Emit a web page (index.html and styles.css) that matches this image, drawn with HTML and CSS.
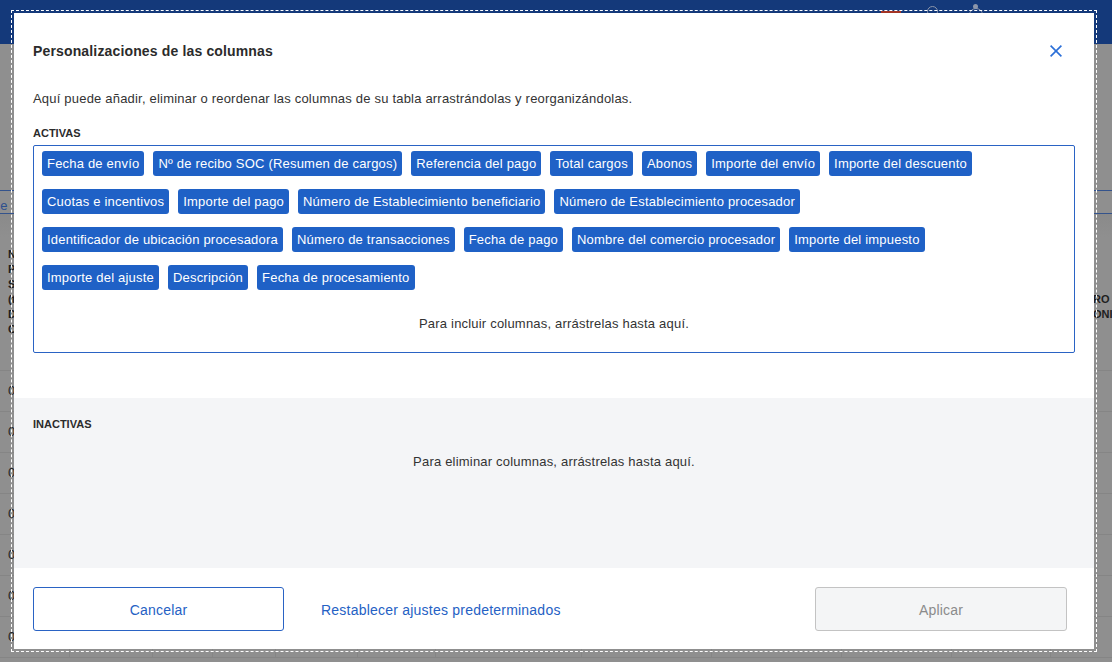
FILE: index.html
```html
<!DOCTYPE html>
<html lang="es">
<head>
<meta charset="utf-8">
<title>Personalizaciones de las columnas</title>
<link rel="stylesheet" href="styles.css">
</head>
<body>
<div class="page">
  <div class="topbar">
    <span class="tb-red"></span>
    <span class="tb-circle"></span>
    <span class="tb-user"></span>
  </div>
  <div class="sub"></div>
  <div class="tabs"><span class="tab-text">de</span></div>
  <div class="band"></div>
  <div class="thead">
    <div class="th-left">Nº<br>Pa<br>SO<br>(tr<br>De<br>Co</div>
    <div class="th-right"><span>RO DE</span><span>ONIO</span></div>
  </div>
  <div class="rows">
    <div class="row"><span class="cell c1">0</span><span class="cell c2"></span><span class="cell c3"></span><span class="cell c4"></span><span class="cell c5"></span><span class="cell c6"></span><span class="cell c7"></span><span class="cell c8"></span><span class="cell c9"></span><span class="cell c10"></span><span class="cell c11"></span></div>
    <div class="row"><span class="cell c1">0</span><span class="cell c2"></span><span class="cell c3"></span><span class="cell c4"></span><span class="cell c5"></span><span class="cell c6"></span><span class="cell c7"></span><span class="cell c8"></span><span class="cell c9"></span><span class="cell c10"></span><span class="cell c11"></span></div>
    <div class="row"><span class="cell c1">0</span><span class="cell c2"></span><span class="cell c3"></span><span class="cell c4"></span><span class="cell c5"></span><span class="cell c6"></span><span class="cell c7"></span><span class="cell c8"></span><span class="cell c9"></span><span class="cell c10"></span><span class="cell c11"></span></div>
    <div class="row"><span class="cell c1">0</span><span class="cell c2"></span><span class="cell c3"></span><span class="cell c4"></span><span class="cell c5"></span><span class="cell c6"></span><span class="cell c7"></span><span class="cell c8"></span><span class="cell c9"></span><span class="cell c10"></span><span class="cell c11"></span></div>
    <div class="row"><span class="cell c1">0</span><span class="cell c2"></span><span class="cell c3"></span><span class="cell c4"></span><span class="cell c5"></span><span class="cell c6"></span><span class="cell c7"></span><span class="cell c8"></span><span class="cell c9"></span><span class="cell c10"></span><span class="cell c11"></span></div>
    <div class="row"><span class="cell c1">0</span><span class="cell c2"></span><span class="cell c3"></span><span class="cell c4"></span><span class="cell c5"></span><span class="cell c6"></span><span class="cell c7"></span><span class="cell c8"></span><span class="cell c9"></span><span class="cell c10"></span><span class="cell c11"></span></div>
    <div class="row"><span class="cell c1">0</span><span class="cell c2"></span><span class="cell c3"></span><span class="cell c4"></span><span class="cell c5"></span><span class="cell c6"></span><span class="cell c7"></span><span class="cell c8"></span><span class="cell c9"></span><span class="cell c10"></span><span class="cell c11"></span></div>
  </div>

  <div class="modal" role="dialog" aria-labelledby="mtitle">
    <div class="modal-head">
      <h2 id="mtitle" class="modal-title">Personalizaciones de las columnas</h2>
      <button class="close-btn" aria-label="Cerrar">
        <svg width="12" height="12" viewBox="0 0 12 12"><path d="M0.6 0.6 L11.4 11.4 M11.4 0.6 L0.6 11.4" stroke="#2b6fd8" stroke-width="1.6" fill="none"/></svg>
      </button>
    </div>
    <p class="modal-desc">Aquí puede añadir, eliminar o reordenar las columnas de su tabla arrastrándolas y reorganizándolas.</p>
    <div class="section-label">ACTIVAS</div>
    <div class="active-box">
      <div class="chip-row">
        <span class="chip">Fecha de envío</span>
        <span class="chip">Nº de recibo SOC (Resumen de cargos)</span>
        <span class="chip">Referencia del pago</span>
        <span class="chip">Total cargos</span>
        <span class="chip">Abonos</span>
        <span class="chip">Importe del envío</span>
        <span class="chip">Importe del descuento</span>
      </div>
      <div class="chip-row">
        <span class="chip">Cuotas e incentivos</span>
        <span class="chip">Importe del pago</span>
        <span class="chip">Número de Establecimiento beneficiario</span>
        <span class="chip">Número de Establecimiento procesador</span>
      </div>
      <div class="chip-row">
        <span class="chip">Identificador de ubicación procesadora</span>
        <span class="chip">Número de transacciones</span>
        <span class="chip">Fecha de pago</span>
        <span class="chip">Nombre del comercio procesador</span>
        <span class="chip">Importe del impuesto</span>
      </div>
      <div class="chip-row">
        <span class="chip">Importe del ajuste</span>
        <span class="chip">Descripción</span>
        <span class="chip">Fecha de procesamiento</span>
      </div>
      <p class="drop-hint first">Para incluir columnas, arrástrelas hasta aquí.</p>
    </div>
    <div class="inactive">
      <div class="section-label">INACTIVAS</div>
      <p class="drop-hint">Para eliminar columnas, arrástrelas hasta aquí.</p>
    </div>
    <div class="modal-foot">
      <button class="btn btn-outline">Cancelar</button>
      <button class="btn-link">Restablecer ajustes predeterminados</button>
      <button class="btn btn-disabled" disabled>Aplicar</button>
    </div>
  </div>
</div>
</body>
</html>
```

FILE: styles.css
```css
* { box-sizing: border-box; }
html, body { margin: 0; padding: 0; }
body {
  font-family: "Liberation Sans", Arial, Helvetica, sans-serif;
  color: #333;
}
.page {
  position: relative;
  width: 1112px;
  height: 662px;
  overflow: hidden;
  background: #8f8f8f;
}

/* dimmed background page */
.topbar {
  height: 44px;
  background: #14397a;
  display: flex;
  align-items: flex-start;
  padding-left: 881px;
}
.tb-red {
  width: 20px;
  height: 3px;
  margin-top: 11px;
  background: #a43424;
}
.tb-circle {
  width: 11px;
  height: 11px;
  margin-top: 6px;
  margin-left: 26px;
  border: 1.5px solid #8d96aa;
  border-radius: 50%;
}
.tb-user {
  position: relative;
  width: 14px;
  height: 14px;
  margin-top: 8px;
  margin-left: 31px;
  border: 1.5px solid #8d96aa;
  border-radius: 50%;
}
.tb-user::before {
  content: "";
  position: absolute;
  left: 3px;
  top: -5px;
  width: 5px;
  height: 5px;
  border-radius: 50%;
  background: #8d96aa;
}
.sub { height: 146px; }
.tabs {
  height: 24px;
  border-top: 1px solid #34538c;
  border-bottom: 1px solid #34538c;
  font-size: 13px;
  line-height: 30px;
  color: #2d4f8e;
  overflow: hidden;
}
.tab-text { margin-left: -7px; }
.band {
  height: 23px;
  background: linear-gradient(#8a8a8a, #8f8f8f);
}
.thead {
  height: 133px;
  display: flex;
  justify-content: space-between;
  font-size: 11px;
  font-weight: bold;
  color: #1e1e1e;
}
.th-left {
  padding: 10px 0 0 8px;
  line-height: 15px;
}
.th-right {
  width: 19px;
  padding-top: 55px;
  display: flex;
  flex-direction: column;
  white-space: nowrap;
  overflow: hidden;
  line-height: 15px;
}
.rows { border-top: 1px solid #858585; }
.row {
  height: 41px;
  display: flex;
  border-bottom: 1px solid #858585;
}
.cell {
  height: 100%;
  border-right: 1px solid #868686;
  font-size: 13px;
  line-height: 40px;
  color: #222;
}
.c1 { width: 70px; padding-left: 8px; }
.c2 { width: 83px; }
.c3 { width: 60px; }
.c4 { width: 63px; }
.c5 { width: 82px; }
.c6 { width: 78px; }
.c7 { width: 146px; }
.c8 { width: 130px; }
.c9 { width: 130px; }
.c10 { width: 110px; }
.c11 { width: 99px; }

/* modal */
.modal {
  position: absolute;
  left: 14px;
  top: 13px;
  width: 1080px;
  height: 636px;
  background: #fff;
  outline: 1px dashed #fff;
  outline-offset: 2px;
  display: flex;
  flex-direction: column;
  letter-spacing: 0.2px;
}
.modal-head {
  display: flex;
  align-items: center;
  justify-content: space-between;
  padding: 28px 32px 0 19px;
}
.modal-title {
  margin: 0;
  font-size: 14px;
  line-height: 20px;
  font-weight: bold;
  color: #2b2b2b;
  letter-spacing: 0.15px;
}
.close-btn {
  border: 0;
  background: none;
  padding: 0;
  width: 12px;
  height: 12px;
  display: flex;
}
.modal-desc {
  margin: 29px 19px 0;
  font-size: 13px;
  line-height: 18px;
  color: #333;
}
.section-label {
  font-size: 11px;
  line-height: 14px;
  font-weight: bold;
  color: #2b2b2b;
  letter-spacing: 0;
}
.modal-desc + .section-label {
  margin: 18px 19px 0;
}
.active-box {
  margin: 5px 19px 0;
  border: 1px solid #2a63c4;
  border-radius: 2px;
  padding: 5px 8px 19px;
  display: flex;
  flex-direction: column;
  gap: 13px;
}
.chip-row {
  display: flex;
  gap: 9px;
}
.chip {
  height: 25px;
  line-height: 24px;
  padding: 1px 5px 0;
  background: #1f61c6;
  color: #fff;
  font-size: 13px;
  border-radius: 3px;
  white-space: nowrap;
}
.drop-hint {
  margin: 0;
  text-align: center;
  font-size: 13px;
  line-height: 18px;
  color: #333;
}
.drop-hint.first { margin-top: 12px; }
.inactive {
  margin-top: 45px;
  height: 170px;
  background: #f4f5f7;
  padding: 19px 19px 0;
}
.inactive .drop-hint { margin-top: 22px; }
.modal-foot {
  margin-top: auto;
  height: 81px;
  display: flex;
  align-items: flex-start;
  padding: 19px 27px 0 19px;
}
.btn {
  height: 44px;
  width: 251px;
  border-radius: 3px;
  font-family: inherit;
  font-size: 14px;
  letter-spacing: 0.2px;
  padding-top: 2px;
}
.btn-outline {
  background: #fff;
  border: 1px solid #2a63c4;
  color: #2561c4;
}
.btn-link {
  height: 44px;
  margin-left: 37px;
  padding: 2px 0 0;
  border: 0;
  background: none;
  font-family: inherit;
  font-size: 14px;
  letter-spacing: 0.22px;
  color: #2561c4;
}
.btn-disabled {
  margin-left: auto;
  width: 252px;
  background: #f4f5f6;
  border: 1px solid #c3c3c3;
  color: #8b8b8b;
}
```
